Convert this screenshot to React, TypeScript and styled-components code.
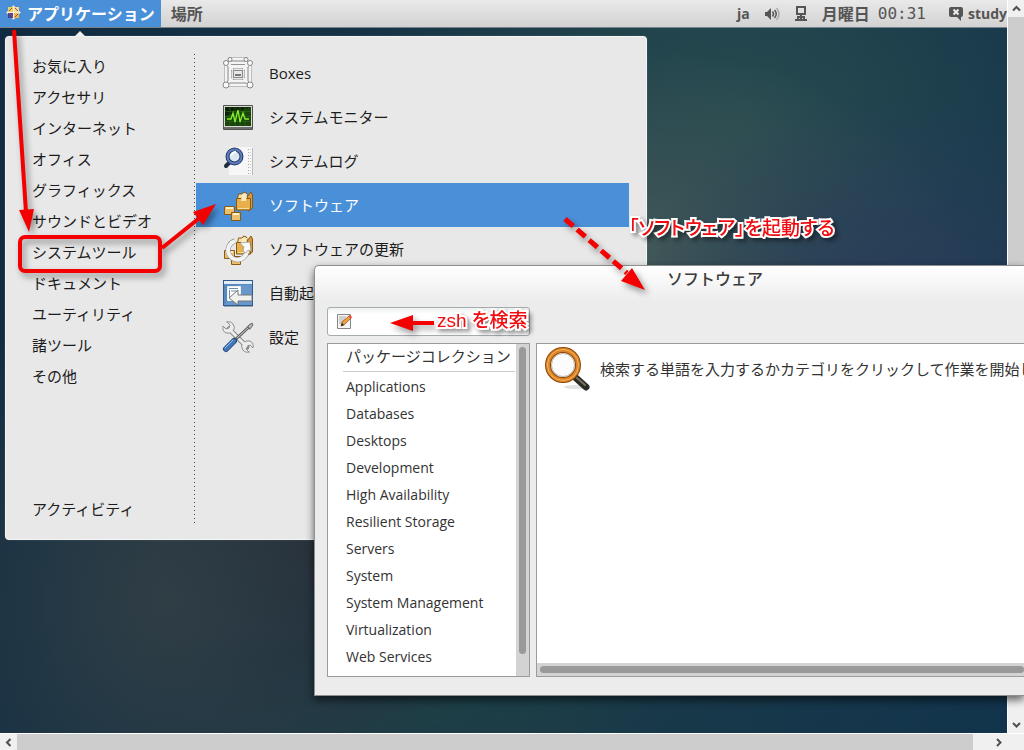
import React from 'react';
import styled, { createGlobalStyle, css } from 'styled-components';

const GlobalStyle = createGlobalStyle`
  * { box-sizing: border-box; }
  body {
    margin: 0;
    background: #f0f0f0;
    font-family: "Open Sans", "Noto Sans CJK JP", sans-serif;
    font-size: 15px;
    color: #1c1c1c;
  }
  button, input { font: inherit; color: inherit; }
  button { border: 0; padding: 0; background: none; text-align: left; cursor: pointer; }
  ul { list-style: none; margin: 0; padding: 0; }
  svg { flex: none; }
`;

const Viewer = styled.div`
  position: relative;
  display: grid;
  grid-template-columns: minmax(0, 1fr) 17px;
  grid-template-rows: minmax(0, 1fr) 17px;
  min-height: 100vh;
  overflow: hidden;
`;

const Desktop = styled.main`
  display: flex;
  flex-direction: column;
  background:
    radial-gradient(ellipse 280px 340px at 165px 600px, rgba(49, 63, 70, 0.95), rgba(49, 63, 70, 0) 100%),
    radial-gradient(ellipse 240px 220px at 300px 540px, rgba(34, 40, 52, 1), rgba(34, 40, 52, 0) 100%),
    radial-gradient(ellipse 260px 200px at 900px 290px, rgba(42, 62, 90, 1), rgba(42, 62, 90, 0) 100%),
    radial-gradient(ellipse 320px 200px at 640px 250px, rgba(66, 88, 88, 1), rgba(66, 88, 88, 0) 100%),
    radial-gradient(ellipse 380px 260px at 740px 110px, rgba(40, 76, 80, 0.9), rgba(40, 76, 80, 0) 100%),
    radial-gradient(ellipse 240px 60px at 420px 715px, rgba(31, 64, 70, 0.9), rgba(31, 64, 70, 0) 100%),
    linear-gradient(100deg, #102b42, #1a3a48 60%, #12344c);
`;

const TopBar = styled.header`
  display: flex;
  align-items: stretch;
  height: 28px;
  background: linear-gradient(#e9e9e9, #d2d2d2);
  border-bottom: 1px solid #77838a;
  color: #555;
  font-weight: 700;
  overflow: hidden;
  white-space: nowrap;
`;

const BarButton = styled.button<{ $active?: boolean }>`
  display: flex;
  align-items: center;
  gap: 6px;
  padding: 0 6px 2px ${p => (p.$active ? 6 : 10)}px;
  font-size: 16px;
  font-weight: 700;
  ${p => p.$active && css`
    background: #4a90d9;
    color: #fff;
  `}
`;

const Status = styled.div`
  display: flex;
  align-items: center;
  margin-left: auto;
  gap: 14px;
  font-size: 14px;
`;

const Clock = styled.time`
  display: flex;
  align-items: center;
  gap: 8px;
  margin-right: 8px;
  font-size: 16px;
  line-height: 24px;
`;

const Digits = styled.span`
  font-family: "DejaVu Sans Mono", monospace;
  font-weight: 400;
`;

const User = styled.span`
  display: flex;
  align-items: center;
  gap: 4px;
`;

const ScrollTrack = styled.div<{ $axis: 'x' | 'y' }>`
  display: flex;
  flex-direction: ${p => (p.$axis === 'x' ? 'row' : 'column')};
  background: #f0f0f0;
  border: 0 solid #fff;
  border-width: ${p => (p.$axis === 'x' ? '1px 0 0' : '0 0 0 1px')};
`;

const ScrollThumb = styled.div`
  flex: 1;
  background: #cdcdcd;
`;

const ScrollArrow = styled.button`
  display: flex;
  align-items: center;
  justify-content: center;
  width: 17px;
  height: 17px;
  flex: none;
`;

const ThumbRest = styled.div<{ $length: number }>`
  flex: none;
  flex-basis: ${p => p.$length}px;
`;

const Menu = styled.nav`
  position: absolute;
  left: 5px;
  top: 36px;
  width: 642px;
  min-height: 504px;
  display: flex;
  padding: 14px 17px 14px 0;
  background: #e8e8e8;
  border: 1px solid #f4f4f4;
  border-radius: 4px;
  box-shadow: 0 0 1px #8c9aa0;
  line-height: 31px;
  &::before {
    content: "";
    position: absolute;
    left: 68px;
    top: -6px;
    border: 6px solid transparent;
    border-top: 0;
    border-bottom-color: #eee;
  }
`;

const Categories = styled.div`
  display: flex;
  flex-direction: column;
  justify-content: space-between;
  width: 188px;
  padding-left: 26px;
`;

const Category = styled.button`
  display: block;
  height: 31px;
  line-height: 31px;
`;

const Divider = styled.div`
  width: 1px;
  margin: 3px 1px 2px 0;
  background: repeating-linear-gradient(#444 0 1px, transparent 1px 4px);
`;

const Programs = styled.ul`
  flex: 1;
`;

const Program = styled.button<{ $selected?: boolean }>`
  display: flex;
  align-items: center;
  gap: 15px;
  width: 100%;
  height: 44px;
  padding-left: 26px;
  background: ${p => (p.$selected ? '#4a90d9' : 'none')};
  color: ${p => (p.$selected ? '#fff' : 'inherit')};
`;

const Window = styled.section`
  position: absolute;
  left: 314px;
  right: 0;
  top: 265px;
  display: flex;
  flex-direction: column;
  padding: 0 0 18px 12px;
  border: 1px solid #8f8f8f;
  border-right: 0;
  border-radius: 5px 0 0 0;
  background: linear-gradient(#fff, #ececec 36px);
  box-shadow: 0 4px 9px rgba(0, 0, 0, 0.6);
  overflow: hidden;
`;

const WindowTitle = styled.h1`
  margin: 0 0 15px;
  padding-left: 340px;
  font-size: 16px;
  line-height: 26px;
  font-weight: 500;
  color: #3c3c3c;
`;

const SearchBox = styled.label`
  display: flex;
  align-items: center;
  width: 203px;
  height: 29px;
  margin-bottom: 7px;
  padding: 0 8px;
  border: 1px solid #a5acad;
  border-radius: 3px;
  background: linear-gradient(#eef0f0, #fff 6px);
`;

const SearchInput = styled.input`
  flex: 1;
  min-width: 0;
  border: 0;
  background: none;
  outline: 0;
`;

const Panes = styled.div`
  display: grid;
  grid-template-columns: 203px minmax(0, 1fr);
  gap: 6px;
`;

const Pane = styled.div`
  display: flex;
  min-height: 334px;
  border: 1px solid #9b9b9b;
  background: #fff;
  color: #333;
`;

const Groups = styled.ul`
  flex: 1;
  min-width: 0;
  padding-left: 15px;
  font-size: 14px;
`;

const GroupHeading = styled.li`
  padding-left: 3px;
  margin: 0 1px 1px 0;
  border-bottom: 1px solid #ccc;
  font-size: 15px;
  line-height: 24px;
  height: 28px;
  white-space: nowrap;
`;

const Group = styled.button`
  display: block;
  width: 100%;
  height: 27px;
  padding-left: 3px;
  line-height: 27px;
`;

const InnerTrack = styled.div<{ $axis: 'x' | 'y' }>`
  display: flex;
  background: #d3d3d3;
  ${p => (p.$axis === 'y'
    ? css`width: 13px; padding: 3px 3px 22px 3px;`
    : css`height: 13px; padding: 3px 0 3px 3px;`)}
`;

const InnerThumb = styled.div`
  flex: 1;
  border-radius: 4px;
  background: #999;
`;

const Results = styled(Pane)`
  flex-direction: column;
  justify-content: space-between;
  border-right: 0;
  overflow: hidden;
`;

const Hint = styled.p`
  display: flex;
  align-items: center;
  gap: 9px;
  margin: 0;
  padding-left: 7px;
  white-space: nowrap;
`;

const Marks = styled.svg`
  position: absolute;
  left: 0;
  top: 0;
  pointer-events: none;
  filter: drop-shadow(3px 4px 3px rgba(0, 0, 0, 0.4));
`;

const Note = styled.span<{ $x: number; $y: number }>`
  position: absolute;
  left: ${p => p.$x}px;
  top: ${p => p.$y}px;
  font-family: "Liberation Sans", "Noto Sans CJK JP", sans-serif;
  font-size: 19px;
  line-height: 28px;
  font-weight: 500;
  font-feature-settings: "palt";
  color: #f00d12;
  white-space: nowrap;
  -webkit-text-stroke: 4px #fff;
  paint-order: stroke fill;
  filter: drop-shadow(3px 3px 2px rgba(0, 0, 0, 0.4));
`;

const Chevron = ({ d }: { d: string }) => (
  <svg width="9" height="9" viewBox="0 0 9 9" fill="none" stroke="#505050" strokeWidth="2" aria-hidden="true">
    <path d={d} />
  </svg>
);

const DistroIcon = () => (
  <svg width="15" height="15" viewBox="0 0 15 15" aria-hidden="true">
    <path d="M7.500 0l2 2h3v3l2.500 2.500-2.500 2.500v3h-3l-2 2-2-2h-3v-3L0 7.500 2.500 5V2h3z" fill="#d9cfc0" />
    <path d="M2 2h5v5H2z" fill="#e8d35a" /><path d="M8 2h5v5H8z" fill="#f0dc90" />
    <path d="M2 8h5v5H2z" fill="#4b4590" /><path d="M8 8h5v5H8z" fill="#e8b64a" />
    <path d="M7.500 1v13M1 7.500h13" stroke="#f6efe2" strokeWidth="1" />
    <path d="M3 8l4 4M9 3l3 3M3 6l3-3M9 12l3-3" stroke="#a3476b" strokeWidth="1" />
  </svg>
);

const SpeakerIcon = () => (
  <svg width="16" height="14" viewBox="0 0 16 14" fill="none" stroke="#555" aria-hidden="true">
    <path d="M1 5h2l4-4v12L3 9H1z" fill="#555" stroke="none" />
    <path d="M8.500 4.500q2 2.500 0 5" strokeWidth="1.500" />
    <path d="M10.500 3q3.500 4 0 8" strokeWidth="1.500" />
    <path d="M12.500 1q5 6 0 12" stroke="#aaa" strokeWidth="1.500" />
  </svg>
);

const NetworkIcon = () => (
  <svg width="14" height="16" viewBox="0 0 14 16" fill="none" stroke="#555" strokeWidth="2" aria-hidden="true">
    <path d="M3 1h8v7H3zM7 8v6M1 14h12" />
    <path d="M3 14v-4h8v4H9v-2H5v2z" fill="#555" stroke="none" />
  </svg>
);

const ChatIcon = () => (
  <svg width="16" height="14" viewBox="0 0 16 14" aria-hidden="true">
    <path d="M3 0h10q2 0 2 2v6q0 2-2 2v4l-4-4H3q-2 0-2-2V2q0-2 2-2z" fill="#555" />
    <path d="M5.500 2.500l5 5M10.500 2.500l-5 5" stroke="#ececec" strokeWidth="2" />
  </svg>
);

const BoxesIcon = () => (
  <svg width="32" height="32" viewBox="0 0 32 32" fill="none" aria-hidden="true">
    <g stroke="#929292" strokeWidth="3"><path d="M4 6h24v22H4zM8 2h16v7H8zM8 10h16v14H8zM4 6l7 7M28 6l-7 7M4 28l7-7M28 28l-7-7" /></g>
    <g stroke="#f4f4f4" strokeWidth="2"><path d="M4 6h24v22H4zM8 2h16v7H8zM8 10h16v14H8zM4 6l7 7M28 6l-7 7M4 28l7-7M28 28l-7-7" /></g>
    <path d="M11.500 13.500h9v7h-9z" fill="#e8e8e8" stroke="#888" /><path d="M13 18h6" stroke="#777" strokeWidth="2" />
    <g fill="#fafafa" stroke="#888"><circle cx="4" cy="6" r="2.500" /><circle cx="28" cy="6" r="2.500" /><circle cx="4" cy="28" r="3" /><circle cx="28" cy="28" r="3" /><circle cx="8" cy="2.500" r="2" /><circle cx="24" cy="2.500" r="2" /></g>
  </svg>
);

const MonitorIcon = () => (
  <svg width="32" height="32" viewBox="0 0 32 32" fill="none" aria-hidden="true">
    <rect x="1" y="4" width="30" height="25" rx="1" fill="#50534e" />
    <rect x="2.500" y="5.500" width="27" height="20" fill="#0b2206" stroke="#d7d9d5" />
    <path d="M3 15l26-9v19H3z" fill="#235e0d" opacity=".6" />
    <path d="M3 10.500h26M3 15.500h26M3 20.500h26M8 6v19M13 6v19M18 6v19M23 6v19" stroke="#2e6716" opacity=".6" />
    <path d="M5 18h4l2-6 2 9 3-12 2 12 3-9 2 6h4" stroke="#86ee2c" strokeWidth="1.300" />
    <path d="M2 27h28" stroke="#888a85" />
  </svg>
);

const LogIcon = () => (
  <svg width="32" height="32" viewBox="0 0 32 32" fill="none" aria-hidden="true">
    <path d="M7 2h23v28H7z" fill="#f7f7f7" /><path d="M30.500 3v27" stroke="#bbb" />
    <path d="M26.500 4v25" stroke="#aaa" strokeDasharray="1 2" /><path d="M28.500 4v25" stroke="#ccc" strokeDasharray="1 2" />
    <path d="M4 21l5-5" stroke="#222c3f" strokeWidth="4" strokeLinecap="round" />
    <circle cx="12.500" cy="11.500" r="7" fill="#dbe6f5" stroke="#24396b" strokeWidth="4" />
    <circle cx="12.500" cy="11.500" r="7" stroke="#5d7eb9" strokeWidth="2" />
    <path d="M9 11q1-4 5-4" stroke="#fff" strokeWidth="2" />
  </svg>
);

const PackageShapes = () => (
  <g stroke="#8a5a12" strokeLinejoin="round">
    <path d="M25 8l4-5 1.500 3v13l-4 3z" fill="#d69a38" />
    <path d="M15.500 10l1-5 4 0 1-2 3 1 1 6z" fill="#f6dfa8" />
    <path d="M14.500 9.500h14V21h-14z" fill="#e8b04d" />
    <path d="M20 5l-1 7h5l1-7z" fill="#fbe9bd" stroke="none" />
    <path d="M2.500 17.500h10v8h-10z" fill="#ecc06a" /><path d="M9.500 23.500h9v8h-9z" fill="#ecc06a" />
    <path d="M4 19h7M11 25h6" stroke="#fff0c8" strokeWidth="2" /><path d="M16 19.500h11" stroke="#f8db9b" />
  </g>
);

const SoftwareIcon = () => (
  <svg width="32" height="32" viewBox="0 0 32 32" fill="none" aria-hidden="true"><PackageShapes /></svg>
);

const UpdateIcon = () => (
  <svg width="32" height="32" viewBox="0 0 32 32" fill="none" aria-hidden="true">
    <PackageShapes />
    <path d="M13 8a9.500 9.500 0 1 0 12 8" stroke="#85888a" strokeWidth="5" />
    <path d="M13 8a9.500 9.500 0 1 0 12 8" stroke="#f2f2f2" strokeWidth="4" />
    <path d="M18 10l10-1 1 9-3-1-2 3-3-2 1-4z" fill="#fafafa" stroke="#999" strokeWidth=".7" />
  </svg>
);

const StartupIcon = () => (
  <svg width="32" height="32" viewBox="0 0 32 32" fill="none" aria-hidden="true">
    <rect x="1.500" y="3.500" width="29" height="25" fill="#5789c1" stroke="#31598c" />
    <path d="M2 4h28v3H2z" fill="#e4ecf5" /><path d="M3 27L16 8h14v20H3z" fill="#79a6d7" opacity=".5" />
    <path d="M5.500 9.500h13v14h-13z" fill="#fff" stroke="#eee" /><path d="M7 11.500h9M7.500 13v7M9 14h6" stroke="#6d8bad" />
    <path d="M30 18H16v-5L7 21l9 7v-4h14z" fill="#f1f1ee" stroke="#777" />
    <path d="M2 29.500h29" stroke="#9ba8b7" />
  </svg>
);

const SettingsIcon = () => (
  <svg width="32" height="32" viewBox="0 0 32 32" fill="none" strokeLinecap="round" aria-hidden="true">
    <path d="M7 8l18 18" stroke="#858885" strokeWidth="5" />
    <path d="M5 1l3 3-1 3-3 1-3-3q-1 5 3 7 4 1 7-2t0-7q-2-3-6-2zM27 31l-3-3 1-3 3-1 3 3q1-5-3-7-4-1-7 2t0 7q2 3 6 2z" fill="#ececec" stroke="#8b8e8b" />
    <path d="M8 9l16 16" stroke="#eceeec" strokeWidth="3" />
    <path d="M14 18L29 4" stroke="#5c5f5c" strokeWidth="3" /><path d="M15 17L28 5" stroke="#d3d7cf" />
    <path d="M26 5l4-3 1 2-3 4z" fill="#bbb" stroke="#666" />
    <path d="M4 28l8-8" stroke="#204a87" strokeWidth="6" /><path d="M4 28l8-8" stroke="#4478b8" strokeWidth="4" />
    <path d="M3 27l8-8" stroke="#a5c6ea" />
  </svg>
);

const EditIcon = () => (
  <svg width="17" height="17" viewBox="0 0 17 17" fill="none" aria-hidden="true">
    <path d="M1.500 1.500h13v14h-13z" fill="#f6f6f4" stroke="#858585" />
    <path d="M3 4h7M3 6h6M3 8h5M3 10h4" stroke="#aaa" />
    <path d="M5 13l1-4 7-6 2 2-7 7z" fill="#f2a13c" stroke="#814515" strokeWidth=".7" />
    <path d="M12 3l2-1 2 2-1 2z" fill="#dd4f45" /><path d="M5 13l1-3 2 2z" fill="#222" />
  </svg>
);

const SearchArt = () => (
  <svg width="47" height="48" viewBox="0 0 47 48" fill="none" aria-hidden="true">
    <ellipse cx="32" cy="43" rx="12" ry="2" fill="#e2e2e2" />
    <path d="M32 34l10 9" stroke="#2b2a25" strokeWidth="7" strokeLinecap="round" />
    <path d="M33 34l8 7" stroke="#77725f" strokeWidth="2" strokeLinecap="round" />
    <circle cx="19" cy="21" r="15" fill="#fcfcfc" stroke="#8f4705" strokeWidth="6" />
    <circle cx="19" cy="21" r="15" stroke="#db8325" strokeWidth="4" />
    <circle cx="19" cy="21" r="15.500" stroke="#f4b465" strokeWidth="1" />
    <circle cx="19" cy="21" r="11.500" stroke="#bdb9b4" strokeWidth="1" />
  </svg>
);

const categories = ['お気に入り', 'アクセサリ', 'インターネット', 'オフィス', 'グラフィックス', 'サウンドとビデオ', 'システムツール', 'ドキュメント', 'ユーティリティ', '諸ツール', 'その他'];

const programs = [
  { name: 'Boxes', Icon: BoxesIcon },
  { name: 'システムモニター', Icon: MonitorIcon },
  { name: 'システムログ', Icon: LogIcon },
  { name: 'ソフトウェア', Icon: SoftwareIcon },
  { name: 'ソフトウェアの更新', Icon: UpdateIcon },
  { name: '自動起動', Icon: StartupIcon },
  { name: '設定', Icon: SettingsIcon },
];

const groups = ['Applications', 'Databases', 'Desktops', 'Development', 'High Availability', 'Resilient Storage', 'Servers', 'System', 'System Management', 'Virtualization', 'Web Services'];

export default function App() {
  return (
    <>
      <GlobalStyle />
      <Viewer>
        <Desktop>
          <TopBar>
            <BarButton $active><DistroIcon />アプリケーション</BarButton>
            <BarButton>場所</BarButton>
            <Status>
              <span>ja</span>
              <SpeakerIcon />
              <NetworkIcon />
              <Clock><span>月曜日</span><Digits>00:31</Digits></Clock>
              <User><ChatIcon />study</User>
            </Status>
          </TopBar>
        </Desktop>

        <ScrollTrack $axis="y">
          <ScrollArrow aria-label="上へ"><Chevron d="M1 6.500l3.500-3.500L8 6.500" /></ScrollArrow>
          <ScrollThumb />
          <ThumbRest $length={60} />
          <ScrollArrow aria-label="下へ"><Chevron d="M1 3l3.500 3.500L8 3" /></ScrollArrow>
        </ScrollTrack>
        <ScrollTrack $axis="x">
          <ScrollArrow aria-label="左へ"><Chevron d="M6.500 1L3 4.500 6.500 8" /></ScrollArrow>
          <ScrollThumb />
          <ThumbRest $length={17} />
          <ScrollArrow aria-label="右へ"><Chevron d="M3 1l3.500 3.500L3 8" /></ScrollArrow>
        </ScrollTrack>
        <ScrollTrack $axis="x" />

        <Menu aria-label="アプリケーション">
          <Categories>
            <ul>
              {categories.map(name => <li key={name}><Category>{name}</Category></li>)}
            </ul>
            <Category>アクティビティ</Category>
          </Categories>
          <Divider />
          <Programs>
            {programs.map(({ name, Icon }) => (
              <li key={name}>
                <Program $selected={name === 'ソフトウェア'}><Icon />{name}</Program>
              </li>
            ))}
          </Programs>
        </Menu>

        <Window>
          <WindowTitle>ソフトウェア</WindowTitle>
          <SearchBox>
            <EditIcon />
            <SearchInput type="text" aria-label="検索" />
          </SearchBox>
          <Panes>
            <Pane>
              <Groups>
                <GroupHeading>パッケージコレクション</GroupHeading>
                {groups.map(name => <li key={name}><Group>{name}</Group></li>)}
              </Groups>
              <InnerTrack $axis="y"><InnerThumb /></InnerTrack>
            </Pane>
            <Results>
              <Hint><SearchArt />検索する単語を入力するかカテゴリをクリックして作業を開始し</Hint>
              <InnerTrack $axis="x"><InnerThumb /></InnerTrack>
            </Results>
          </Panes>
        </Window>

        <Marks width="700" height="350" viewBox="0 0 700 350" fill="none" stroke="#f40000" aria-hidden="true">
          <rect x="20" y="237" width="140" height="34" rx="5" strokeWidth="4" />
          <path d="M14 30l12 182M162 248l40-32M434 323h-24" strokeWidth="4" />
          <path d="M565 219l62 54" strokeWidth="5" strokeDasharray="11 5" />
          <path d="M19 210l15-1-5 23zM193 212l23-8-13 21zM390 323l23-8v16zM632 268l13 22-24-9z" fill="#f40000" stroke="none" />
        </Marks>
        <Note $x={629} $y={215}>「ソフトウェア」を起動する</Note>
        <Note $x={437} $y={307}>zsh を検索</Note>
      </Viewer>
    </>
  );
}
